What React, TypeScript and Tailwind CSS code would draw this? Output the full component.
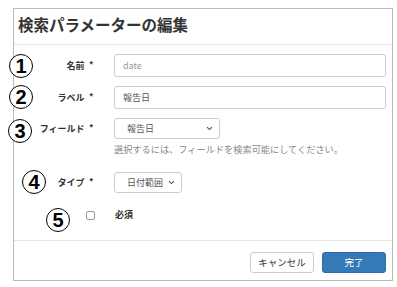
import React from 'react';

const JP = "font-['Noto_Sans_CJK_JP',sans-serif]";

function Label({ text }: { text: string }) {
  return (
    <div className="w-[82px] shrink-0 pr-[3px] text-right text-[9px] font-bold leading-none text-[#333]">
      <span>{text}</span>
      <span className="ml-[5px] relative top-[-2px] font-['Liberation_Sans',sans-serif]">*</span>
    </div>
  );
}

function Chevron() {
  return (
    <svg width="7" height="5" viewBox="0 0 7 5" className="shrink-0">
      <path d="M1 1.2 L3.5 3.6 L6 1.2" fill="none" stroke="#555" strokeWidth="1.1" />
    </svg>
  );
}

function FakeSelect({ value, width }: { value: string; width: string }) {
  return (
    <div
      className={`${width} h-[21px] ml-[18px] flex items-center justify-between pl-[12px] pr-[6px] border border-[#ccc] rounded-[3px] text-[9px] text-[#555] bg-white`}
    >
      <span>{value}</span>
      <Chevron />
    </div>
  );
}

function Marker({ n, className }: { n: number; className: string }) {
  return (
    <div
      className={`absolute w-[24px] h-[24px] rounded-full border-[1.5px] border-black bg-white flex items-center justify-center font-['Liberation_Sans',sans-serif] text-[20px] font-bold leading-none text-black ${className}`}
    >
      {n}
    </div>
  );
}

export default function App() {
  return (
    <div className={`relative w-[397px] h-[287px] bg-white pt-2 pl-[13px] ${JP}`}>
      <div className="w-[380px] h-[273px] border border-[#bbb] flex flex-col bg-white">
        {/* header */}
        <div className="h-[36px] shrink-0 border-b border-[#e5e5e5] pl-[4px] flex items-center pb-[3px]">
          <h1 className="text-[15.5px] font-bold text-[#333] leading-none">検索パラメーターの編集</h1>
        </div>

        {/* body */}
        <div className="flex-1 flex flex-col pt-[9px] pr-[6px]">
          <div className="flex items-center h-[23px]">
            <Label text="名前" />
            <input
              className="flex-1 h-[23px] ml-[18px] px-[8px] border border-[#ccc] rounded-[3px] text-[9px] text-[#555] placeholder:text-[#999] outline-none"
              placeholder="date"
              readOnly
            />
          </div>
          <div className="flex items-center h-[23px] mt-[9px]">
            <Label text="ラベル" />
            <input
              className="flex-1 h-[23px] ml-[18px] px-[8px] border border-[#ccc] rounded-[3px] text-[9px] text-[#555] outline-none"
              value="報告日"
              readOnly
            />
          </div>
          <div className="flex items-center h-[21px] mt-[9px]">
            <Label text="フィールド" />
            <FakeSelect value="報告日" width="w-[106px]" />
          </div>
          <p className="ml-[100px] mt-[3px] text-[9.2px] leading-[14px] text-[#888]">
            選択するには、フィールドを検索可能にしてください。
          </p>
          <div className="flex items-center h-[21px] mt-[16px]">
            <Label text="タイプ" />
            <FakeSelect value="日付範囲" width="w-[68px]" />
          </div>
          <div className="flex items-center h-[20px] mt-[12px]">
            <div className="w-[82px] shrink-0 flex justify-end pr-[1px]">
              <span className="w-[9px] h-[9px] border border-[#999] rounded-[2px] bg-white" />
            </div>
            <span className="ml-[19px] text-[9px] font-bold text-[#333]">必須</span>
          </div>
        </div>

        {/* footer */}
        <div className="h-[40px] shrink-0 border-t border-[#e5e5e5] flex justify-end items-start gap-[8px] pt-[11px] pr-[6px]">
          <button className="w-[64px] h-[21px] border border-[#ccc] rounded-[3px] bg-white text-[9.5px] text-[#333]">
            キャンセル
          </button>
          <button className="w-[64px] h-[21px] border border-[#2e6da4] rounded-[3px] bg-[#337ab7] text-[9.5px] text-white">
            完了
          </button>
        </div>
      </div>

      {/* annotation markers */}
      <Marker n={1} className="left-[9px] top-[54px]" />
      <Marker n={2} className="left-[9px] top-[85px]" />
      <Marker n={3} className="left-[8px] top-[119px]" />
      <Marker n={4} className="left-[22px] top-[170px]" />
      <Marker n={5} className="left-[46px] top-[208px]" />
    </div>
  );
}
